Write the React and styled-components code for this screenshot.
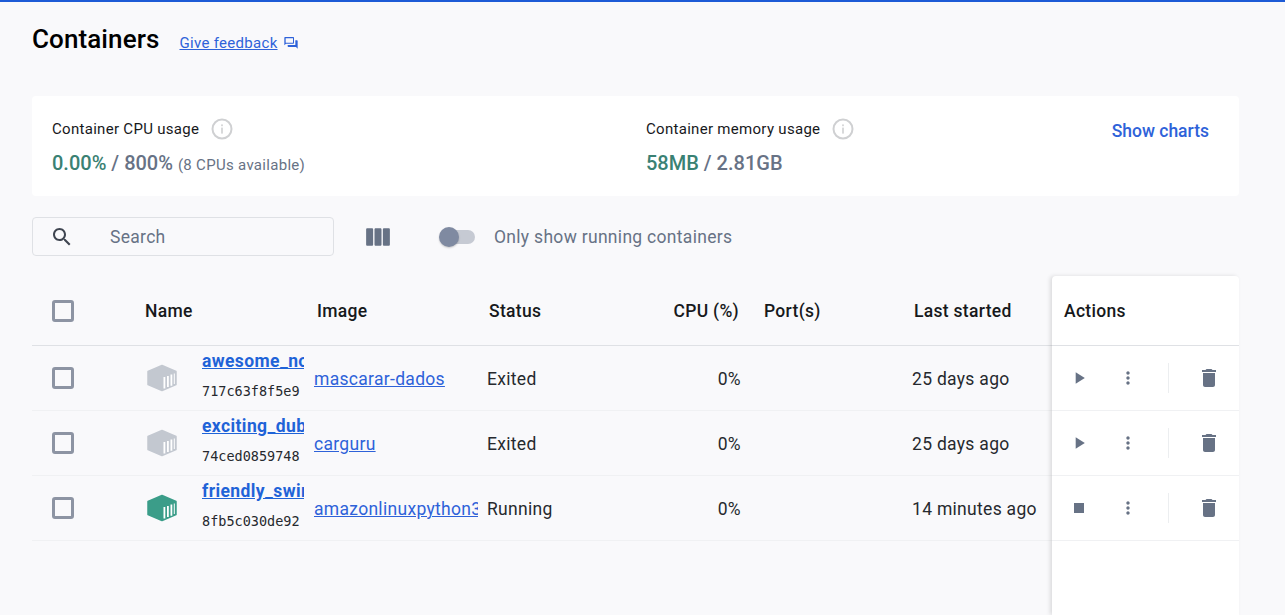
import styled, { createGlobalStyle } from "styled-components";

const GlobalStyle = createGlobalStyle`
  html, body {
    margin: 0;
    padding: 0;
    background: #f9f9fb;
    font-family: Roboto, "Liberation Sans", sans-serif;
    overflow: hidden;
  }
`;

const containers = [
  { name: "awesome_noether", id: "717c63f8f5e9", image: "mascarar-dados", status: "Exited", started: "25 days ago" },
  { name: "exciting_dubinsky", id: "74ced0859748", image: "carguru", status: "Exited", started: "25 days ago" },
  { name: "friendly_swirles", id: "8fb5c030de92", image: "amazonlinuxpython39", status: "Running", started: "14 minutes ago" },
];

function ContainerIcon({ running }) {
  const color = running ? "#3b9d89" : "#c3c8d0";
  return (
    <svg width="32" height="28" viewBox="0 0 32 28">
      <path
        d="M16 1.5 30 7.500V20.500L16 26.500 2 20.500V7.500Z"
        fill={color}
        stroke={color}
        strokeWidth="1.5"
        strokeLinejoin="round"
      />
      <path d="M17.500 13h1.800v11.500h-1.800zM21 12h1.800v11h-1.800zM24.500 10.500h1.800v11.200h-1.800zM27.800 9.500h1v10.500h-1z" fill="#fff" />
    </svg>
  );
}

function InfoIcon() {
  return (
    <svg width="22" height="22" viewBox="0 0 22 22">
      <circle cx="11" cy="11" r="9.500" fill="none" stroke="#cfd0d2" strokeWidth="2" />
      <rect x="10.200" y="9.600" width="1.600" height="6" fill="#cfd0d2" />
      <rect x="10.200" y="6.400" width="1.600" height="1.800" fill="#cfd0d2" />
    </svg>
  );
}

function MaterialIcon({ d, size = 24, color = "#677285" }) {
  return (
    <svg width={size} height={size} viewBox="0 0 24 24" fill={color}>
      <path d={d} />
    </svg>
  );
}

const icons = {
  search:
    "M15.5 14h-.79l-.28-.27C15.41 12.59 16 11.11 16 9.5 16 5.91 13.09 3 9.5 3S3 5.91 3 9.5 5.91 16 9.5 16c1.61 0 3.09-.59 4.23-1.57l.27.28v.79l5 4.99L20.49 19l-4.99-5zm-6 0C7.01 14 5 11.99 5 9.5S7.01 5 9.5 5 14 7.01 14 9.5 11.99 14 9.5 14z",
  play: "M8 5v14l11-7z",
  stop: "M6 6h12v12H6z",
  more: "M12 8c1.1 0 2-.9 2-2s-.9-2-2-2-2 .9-2 2 .9 2 2 2zm0 2c-1.1 0-2 .9-2 2s.9 2 2 2 2-.9 2-2-.9-2-2-2zm0 6c-1.1 0-2 .9-2 2s.9 2 2 2 2-.9 2-2-.9-2-2-2z",
  trash: "M6 19c0 1.1.9 2 2 2h8c1.1 0 2-.9 2-2V7H6v12zM19 4h-3.5l-1-1h-5l-1 1H5v2h14V4z",
  feedback:
    "M3 3h12.5c.55 0 1 .45 1 1v8c0 .55-.45 1-1 1H4.500L2 15.500V4c0-.55.45-1 1-1zm1 2v6.500h11V5zM18.500 8H21c.55 0 1 .45 1 1v11.500L19.500 18H8c-.55 0-1-.45-1-1v-2h11.500z",
  columns:
    "M3.5 5h3.6c.6 0 1 .4 1 1v12c0 .6-.4 1-1 1H3.500c-.6 0-1-.4-1-1V6c0-.6.4-1 1-1zm6.7 0h3.600c.6 0 1 .4 1 1v12c0 .6-.4 1-1 1h-3.600c-.6 0-1-.4-1-1V6c0-.6.4-1 1-1zm6.700 0h3.600c.6 0 1 .4 1 1v12c0 .6-.4 1-1 1h-3.600c-.6 0-1-.4-1-1V6c0-.6.4-1 1-1z",
};

export default function App() {
  return (
    <Page>
      <GlobalStyle />
      <TitleRow>
        <Title>Containers</Title>
        <Feedback>
          <FeedbackLink href="#">Give feedback</FeedbackLink>
          <MaterialIcon d={icons.feedback} size={16} color="#2e62d9" />
        </Feedback>
      </TitleRow>

      <Summary>
        <Usage $width="594px">
          <UsageLabel>
            Container CPU usage
            <InfoIcon />
          </UsageLabel>
          <UsageValue>
            <Used>0.00%</Used> / 800% <Hint>(8 CPUs available)</Hint>
          </UsageValue>
        </Usage>
        <Usage $width="439px">
          <UsageLabel>
            Container memory usage
            <InfoIcon />
          </UsageLabel>
          <UsageValue>
            <Used>58MB</Used> / 2.81GB
          </UsageValue>
        </Usage>
        <ShowCharts>Show charts</ShowCharts>
      </Summary>

      <Toolbar>
        <SearchBox>
          <MaterialIcon d={icons.search} color="#3f4550" />
          <SearchText>Search</SearchText>
        </SearchBox>
        <ColumnsButton>
          <MaterialIcon d={icons.columns} size={30} />
        </ColumnsButton>
        <Toggle>
          <ToggleTrack />
          <ToggleThumb />
        </Toggle>
        <ToggleLabel>Only show running containers</ToggleLabel>
      </Toolbar>

      <TableArea>
        <TableMain>
          <HeaderRow>
            <Cell>
              <CheckBox />
            </Cell>
            <HeadCell>Name</HeadCell>
            <HeadCell $pad="3px">Image</HeadCell>
            <HeadCell $pad="2px">Status</HeadCell>
            <HeadCell $right>CPU (%)</HeadCell>
            <HeadCell $pad="23px">Port(s)</HeadCell>
            <HeadCell $pad="2px">Last started</HeadCell>
          </HeaderRow>
          {containers.map((c) => (
            <Row key={c.id}>
              <Cell>
                <CheckBox />
              </Cell>
              <NameCell>
                <ContainerIcon running={c.status === "Running"} />
                <NameText>
                  <NameLink href="#">{c.name}</NameLink>
                  <ContainerId>{c.id}</ContainerId>
                </NameText>
              </NameCell>
              <ImageCell>
                <ImageLink href="#">{c.image}</ImageLink>
              </ImageCell>
              <DataCell>{c.status}</DataCell>
              <DataCell $right>0%</DataCell>
              <DataCell />
              <DataCell>{c.started}</DataCell>
            </Row>
          ))}
        </TableMain>

        <ActionsPanel>
          <ActionsHeader>Actions</ActionsHeader>
          {containers.map((c) => (
            <ActionsRow key={c.id}>
              <ActionSlot>
                <MaterialIcon d={c.status === "Running" ? icons.stop : icons.play} size={20} />
              </ActionSlot>
              <ActionSlot>
                <MaterialIcon d={icons.more} size={20} />
              </ActionSlot>
              <ActionDivider />
              <ActionSlot>
                <MaterialIcon d={icons.trash} size={24} />
              </ActionSlot>
            </ActionsRow>
          ))}
        </ActionsPanel>
      </TableArea>
    </Page>
  );
}

const Page = styled.div`
  box-sizing: border-box;
  height: 100vh;
  display: flex;
  flex-direction: column;
  padding: 0 46px 0 32px;
  border-top: 2px solid #1d5bd6;
  color: #17191c;
`;

const TitleRow = styled.div`
  display: flex;
  align-items: center;
  gap: 20px;
  height: 36px;
  margin-top: 18px;
`;

const Title = styled.h1`
  margin: 1px 0 0;
  font-size: 26px;
  font-weight: 500;
  letter-spacing: 0.1px;
  line-height: 36px;
  color: #000;
`;

const Feedback = styled.div`
  display: flex;
  align-items: center;
  gap: 5px;
  padding-top: 10px;
`;

const FeedbackLink = styled.a`
  font-size: 15px;
  color: #2e62d9;
  letter-spacing: 0.3px;
`;

const Summary = styled.section`
  display: flex;
  box-sizing: border-box;
  height: 100px;
  margin-top: 40px;
  padding: 21px 20px 19px;
  background: #fff;
  border-radius: 4px;
`;

const Usage = styled.div`
  width: ${(p) => p.$width};
  flex: none;
`;

const UsageLabel = styled.div`
  display: flex;
  align-items: center;
  gap: 12px;
  height: 24px;
  font-size: 15px;
  letter-spacing: 0.3px;
`;

const UsageValue = styled.div`
  margin-top: 9px;
  font-size: 20px;
  font-weight: 500;
  line-height: 26px;
  color: #677285;
`;

const Used = styled.span`
  color: #3a8173;
`;

const Hint = styled.span`
  font-size: 15px;
  font-weight: 400;
  letter-spacing: 0.3px;
`;

const ShowCharts = styled.div`
  margin: 1px 10px 0 auto;
  font-size: 17.5px;
  font-weight: 500;
  line-height: 26px;
  color: #2e62d9;
`;

const Toolbar = styled.div`
  display: flex;
  align-items: center;
  height: 39px;
  margin-top: 21px;
`;

const SearchBox = styled.div`
  display: flex;
  align-items: center;
  box-sizing: border-box;
  width: 302px;
  height: 39px;
  padding-left: 17px;
  gap: 36px;
  border: 1px solid #dfe1e5;
  border-radius: 4px;
`;

const SearchText = styled.span`
  font-size: 17.5px;
  letter-spacing: 0.3px;
  color: #677285;
`;

const ColumnsButton = styled.div`
  display: flex;
  margin-left: 29px;
`;

const Toggle = styled.div`
  position: relative;
  width: 38px;
  height: 20px;
  margin-left: 46px;
`;

const ToggleTrack = styled.div`
  position: absolute;
  left: 2px;
  right: 2px;
  top: 3px;
  bottom: 3px;
  border-radius: 7px;
  background: #c6cad3;
`;

const ToggleThumb = styled.div`
  position: absolute;
  left: 0;
  top: 0;
  width: 20px;
  height: 20px;
  border-radius: 50%;
  background: #7f8aa1;
  box-shadow: 0 1px 2px rgba(0, 0, 0, 0.2);
`;

const ToggleLabel = styled.span`
  margin-left: 17px;
  font-size: 17.5px;
  letter-spacing: 0.3px;
  color: #677285;
`;

const TableArea = styled.div`
  flex: 1;
  display: flex;
  margin-top: 20px;
  min-height: 0;
`;

const TableMain = styled.div`
  width: 1020px;
  flex: none;
`;

const Row = styled.div`
  display: grid;
  grid-template-columns: 113px 169px 173px 150px 104px 171px 140px;
  align-items: center;
  box-sizing: border-box;
  height: 65px;
  border-bottom: 1px solid #f0f1f3;
  font-size: 17.5px;
  letter-spacing: 0.3px;
  color: #26292e;
`;

const HeaderRow = styled(Row)`
  height: 70px;
  border-bottom-color: #dfe1e5;
  color: #17191c;
`;

const Cell = styled.div`
  min-width: 0;
  white-space: nowrap;
  overflow: hidden;
  ${(p) => p.$right && "text-align: right;"}
  &:first-child {
    padding-left: 20px;
  }
`;

const HeadCell = styled(Cell)`
  font-weight: 500;
  padding-left: ${(p) => p.$pad || 0};
  padding-right: ${(p) => (p.$right ? "2px" : 0)};
`;

const DataCell = styled(Cell)`
  padding-top: 2px;
`;

const CheckBox = styled.div`
  box-sizing: border-box;
  width: 22px;
  height: 22px;
  border: 3px solid #8d94a3;
  border-radius: 3px;
`;

const NameCell = styled(Cell)`
  display: flex;
  align-items: center;
  padding-left: 1px;
  gap: 24px;
  width: 158px;
`;

const NameText = styled.div`
  flex: 1;
  min-width: 0;
  overflow: hidden;
  padding-bottom: 7px;
`;

const NameLink = styled.a`
  display: block;
  font-size: 17.5px;
  font-weight: 700;
  letter-spacing: 0.4px;
  line-height: 22px;
  color: #1f63d8;
  text-decoration: underline;
`;

const ContainerId = styled.div`
  margin-top: 11px;
  font-family: "DejaVu Sans Mono", monospace;
  font-size: 13.5px;
  letter-spacing: 0;
  line-height: 16px;
`;

const ImageCell = styled(Cell)`
  padding-top: 2px;
  width: 164px;
`;

const ImageLink = styled.a`
  color: #2e62d9;
  text-decoration: underline;
`;

const ActionsPanel = styled.div`
  width: 187px;
  flex: none;
  background: #fff;
  border-radius: 4px 4px 0 0;
  box-shadow: -2px 0 4px rgba(0, 0, 0, 0.12);
`;

const ActionsHeader = styled.div`
  display: flex;
  align-items: center;
  box-sizing: border-box;
  height: 70px;
  padding-left: 12px;
  border-bottom: 1px solid #dfe1e5;
  font-size: 17.5px;
  font-weight: 500;
  letter-spacing: 0.3px;
  color: #17191c;
`;

const ActionsRow = styled.div`
  display: grid;
  grid-template-columns: 53px 46px 18px 80px;
  align-items: center;
  box-sizing: border-box;
  height: 65px;
  border-bottom: 1px solid #f0f1f3;
`;

const ActionSlot = styled.div`
  display: flex;
  justify-content: center;
`;

const ActionDivider = styled.div`
  justify-self: end;
  width: 1px;
  height: 30px;
  background: #eceef0;
`;
